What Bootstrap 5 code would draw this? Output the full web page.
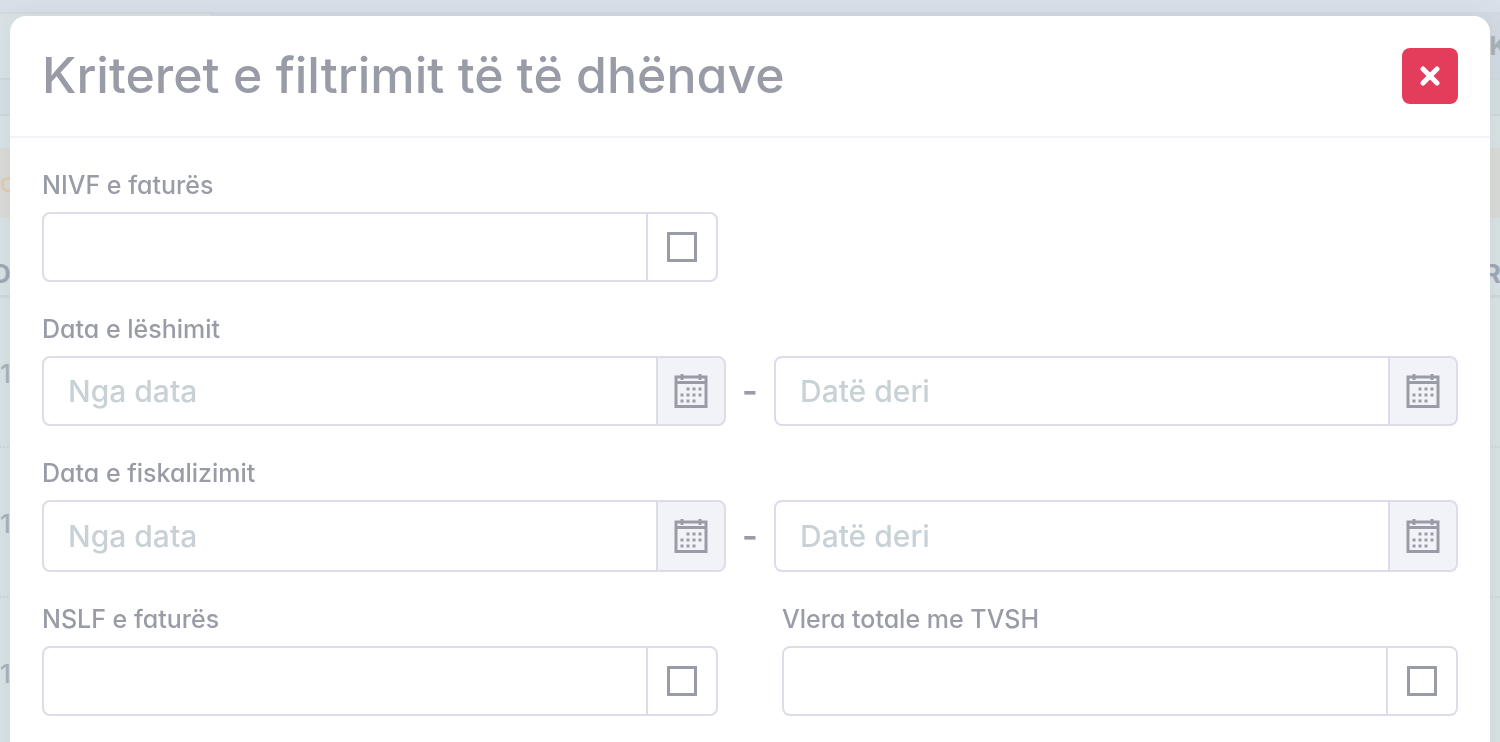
<!DOCTYPE html>
<html lang="sq">
<head>
<meta charset="utf-8">
<meta name="viewport" content="width=device-width, initial-scale=1">
<title>Kriteret e filtrimit</title>
<link href="https://cdn.jsdelivr.net/npm/bootstrap@5.3.0/dist/css/bootstrap.min.css" rel="stylesheet">
<style>
:root { --ink: #999ca6; --line: #dddce8; --soft: #f2f3f9; }
html, body { height: 100%; overflow: hidden; }
body { font-family: Inter, Lato, sans-serif; font-feature-settings: "cv11"; font-weight: 500; color: var(--ink); background: #d9e2e5; }

/* invoice list behind the dialog */
.backdrop-page { color: #a8b2b7; font-size: 26px; line-height: 28px; white-space: nowrap; }
.bg-top { height: 14px; background: #dae0e9; border-bottom: 2px solid #d2dadf; }
.bg-tabs { height: 64px; background: linear-gradient(90deg, #dae3e5 210px, #d3dae2 210px); }
.bg-tools { height: 38px; background: #d5dee4; border-top: 2px solid #cfd8dd; border-bottom: 2px solid #cfd8dd; }
.bg-gap { height: 32px; }
.bg-note { height: 70px; background: #dadbd8; color: #e0cdb2; }
.bg-head { height: 80px; padding-top: 42px; color: #9fa7b4; border-bottom: 3px solid #d0d8de; }
.bg-line { height: 150px; padding-top: 62px; border-bottom: 2px dotted #cfd8dc; }
.bg-edge { margin-left: -8px; margin-right: -8px; }

.filter-dialog { max-width: none; margin: 16px 10px; }
.filter-dialog .modal-content { border: 0; border-radius: 16px; color: var(--ink); box-shadow: 0 0 28px rgba(90, 110, 120, .1); min-height: 100vh; }
.filter-dialog .modal-header { padding: 32px; height: 122px; border-bottom: 2px solid var(--soft); }
.filter-dialog .modal-title { font-size: 50px; line-height: 54px; font-weight: 500; }
.filter-dialog .modal-body { padding: 32px; }
.close-btn { width: 56px; height: 56px; border-radius: 8px; background: #e43d5c; }
.close-btn:hover { background: #cf3350; }

.field-row { --bs-gutter-x: 64px; }
.field-block { margin-bottom: 32px; }
.field-label { display: block; font-size: 25px; line-height: 30px; margin-bottom: 12px; }
.field-box { height: 70px; }
.field-box .form-control { border: 2px solid var(--line); border-radius: 8px; padding: 0 24px; font-size: 30px; font-weight: 500; color: var(--ink); }
.field-box .form-control::placeholder { color: #c8d1d6; opacity: 1; }
.field-box .input-group-text { border: 2px solid var(--line); border-radius: 8px; background: #fff; width: 72px; padding: 0; margin-left: -2px !important; }
.field-box .date-btn { width: 70px; background: var(--soft); color: var(--ink); }
.field-box.tall { height: 72px; }
.tick { appearance: none; width: 30px; height: 30px; margin: 0; border: 3px solid var(--ink); background: #fff; }
.tick:checked { background: var(--ink); box-shadow: inset 0 0 0 4px #fff; }
.dash { width: 48px; font-size: 34px; line-height: 40px; font-weight: 600; }
</style>
</head>
<body>
<div class="backdrop-page" aria-hidden="true">
  <div class="bg-top"></div>
  <div class="bg-tabs d-flex align-items-center justify-content-end"><span class="bg-edge fw-bold">K</span></div>
  <div class="bg-tools"></div>
  <div class="bg-gap"></div>
  <div class="bg-note d-flex align-items-center">c</div>
  <div class="bg-head"><div class="bg-edge d-flex justify-content-between fw-bold"><span>D</span><span>RI</span></div></div>
  <div class="bg-line">11</div>
  <div class="bg-line">11</div>
  <div class="bg-line">11</div>
</div>

<svg class="d-none" xmlns="http://www.w3.org/2000/svg">
  <symbol id="calendar" viewBox="0 0 34 36">
    <path d="M2 4h30v29.500H2zM2 9.500h30" fill="none" stroke="currentColor" stroke-width="3"/>
    <path d="M8 1v6M26 1v6" stroke="currentColor" stroke-width="3"/>
    <path d="M12.500 16h15.100M6.500 22h21.100M6.500 28h15.100" stroke="currentColor" stroke-width="3" stroke-dasharray="3 3"/>
  </symbol>
</svg>

<div class="modal show d-block overflow-hidden" role="dialog" aria-labelledby="dialogTitle">
  <div class="modal-dialog filter-dialog">
    <div class="modal-content">
      <div class="modal-header d-flex align-items-start justify-content-between">
        <h1 class="modal-title" id="dialogTitle">Kriteret e filtrimit të të dhënave</h1>
        <button type="button" class="btn close-btn border-0 p-0 d-flex align-items-center justify-content-center" aria-label="Mbyll">
          <svg width="20" height="20" viewBox="0 0 20 20"><path d="M3 3l14 14M17 3l-14 14" stroke="#fff" stroke-width="5" stroke-linecap="round"/></svg>
        </button>
      </div>
      <form class="modal-body">
        <div class="row field-row">
          <div class="col-6 field-block">
            <label class="field-label" for="nivf">NIVF e faturës</label>
            <div class="input-group field-box">
              <input type="text" class="form-control" id="nivf">
              <span class="input-group-text justify-content-center"><input class="tick" type="checkbox" aria-label="NIVF e faturës"></span>
            </div>
          </div>
        </div>

        <div class="field-block">
          <label class="field-label" for="issueFrom">Data e lëshimit</label>
          <div class="d-flex align-items-center">
            <div class="input-group field-box">
              <input type="text" class="form-control" id="issueFrom" placeholder="Nga data">
              <button type="button" class="input-group-text date-btn justify-content-center" aria-label="Kalendari"><svg width="34" height="36"><use href="#calendar"/></svg></button>
            </div>
            <span class="dash flex-shrink-0 text-center">-</span>
            <div class="input-group field-box">
              <input type="text" class="form-control" placeholder="Datë deri" aria-label="Data e lëshimit, deri">
              <button type="button" class="input-group-text date-btn justify-content-center" aria-label="Kalendari"><svg width="34" height="36"><use href="#calendar"/></svg></button>
            </div>
          </div>
        </div>

        <div class="field-block">
          <label class="field-label" for="fiscFrom">Data e fiskalizimit</label>
          <div class="d-flex align-items-center">
            <div class="input-group field-box tall">
              <input type="text" class="form-control" id="fiscFrom" placeholder="Nga data">
              <button type="button" class="input-group-text date-btn justify-content-center" aria-label="Kalendari"><svg width="34" height="36"><use href="#calendar"/></svg></button>
            </div>
            <span class="dash flex-shrink-0 text-center">-</span>
            <div class="input-group field-box tall">
              <input type="text" class="form-control" placeholder="Datë deri" aria-label="Data e fiskalizimit, deri">
              <button type="button" class="input-group-text date-btn justify-content-center" aria-label="Kalendari"><svg width="34" height="36"><use href="#calendar"/></svg></button>
            </div>
          </div>
        </div>

        <div class="row field-row">
          <div class="col-6 field-block">
            <label class="field-label" for="nslf">NSLF e faturës</label>
            <div class="input-group field-box">
              <input type="text" class="form-control" id="nslf">
              <span class="input-group-text justify-content-center"><input class="tick" type="checkbox" aria-label="NSLF e faturës"></span>
            </div>
          </div>
          <div class="col-6 field-block">
            <label class="field-label" for="total">Vlera totale me TVSH</label>
            <div class="input-group field-box">
              <input type="text" class="form-control" id="total">
              <span class="input-group-text justify-content-center"><input class="tick" type="checkbox" aria-label="Vlera totale me TVSH"></span>
            </div>
          </div>
        </div>
      </form>
    </div>
  </div>
</div>
<script src="https://cdn.jsdelivr.net/npm/bootstrap@5.3.0/dist/js/bootstrap.bundle.min.js"></script>
</body>
</html>
